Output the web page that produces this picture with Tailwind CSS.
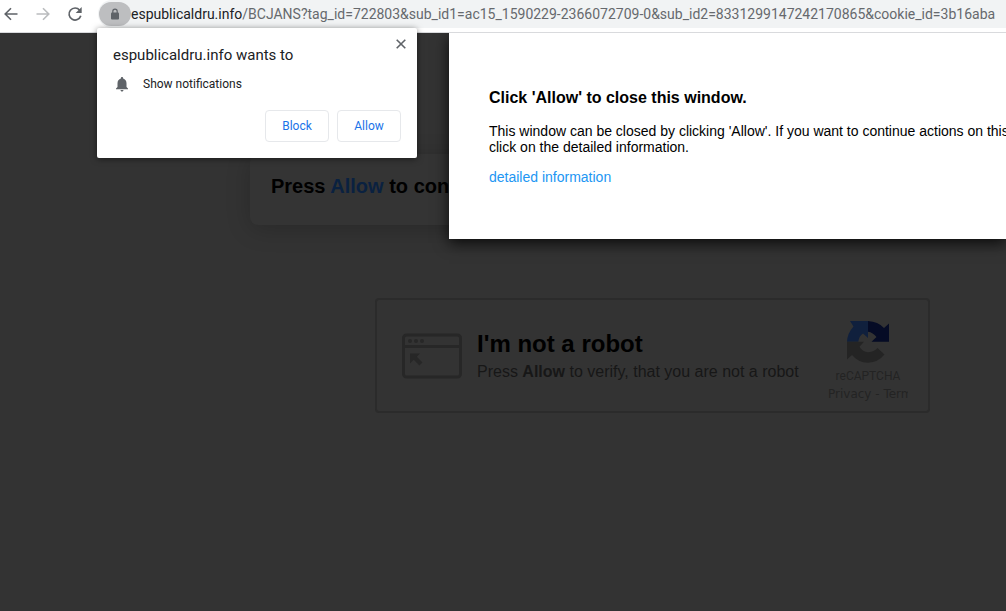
<!DOCTYPE html>
<html lang="en">
<head>
  <meta charset="UTF-8" />
  <meta name="viewport" content="width=device-width, initial-scale=1" />
  <title>espublicaldru.info</title>
  <script src="https://cdn.jsdelivr.net/npm/@tailwindcss/browser@4"></script>
</head>
<body class="min-h-screen flex flex-col overflow-hidden bg-[#333333] font-['Liberation_Sans',Arial,sans-serif] text-black">
  <!-- Browser toolbar -->
  <header class="relative z-20 flex items-start bg-white border-b border-[#d9dadd] h-[33px] overflow-hidden">
    <nav class="flex items-center gap-3 h-7 pl-px w-[98px] shrink-0">
      <button aria-label="Back" class="text-[#5f6368]">
        <svg class="size-5" viewBox="0 0 20 20" fill="none" stroke="currentColor" stroke-width="1.6"><path d="M16.5 10H4.5M10 4.2L4.2 10L10 15.8" /></svg>
      </button>
      <button aria-label="Forward" class="text-[#babcbe]">
        <svg class="size-5" viewBox="0 0 20 20" fill="none" stroke="currentColor" stroke-width="1.6"><path d="M3.5 10H15.5M10 4.2L15.8 10L10 15.8" /></svg>
      </button>
      <button aria-label="Reload" class="text-[#5f6368]">
        <svg class="size-5" viewBox="0 0 20 20"><path d="M14.7 6.2A6 6 0 1 0 15.8 11.8" fill="none" stroke="currentColor" stroke-width="1.7" /><path d="M16.7 3V9H10.7Z" fill="currentColor" /></svg>
      </button>
    </nav>
    <div class="flex flex-1 items-center h-7 min-w-0 bg-[#f1f3f4] rounded-l-full">
      <button aria-label="Site information" class="flex items-center justify-center shrink-0 w-8 h-6 ml-px rounded-full bg-[#bdbec0] text-[#5f6368]">
        <svg class="w-3 h-3" viewBox="0 0 12 12"><path d="M3.8 5.5V3.4A2.2 2.2 0 0 1 8.2 3.4V5.5" fill="none" stroke="currentColor" stroke-width="1.2" /><rect x="2" y="4.6" width="8" height="7" rx="1" fill="currentColor" /></svg>
      </button>
      <p class="font-[Roboto,sans-serif] text-sm whitespace-nowrap text-[#66696d]"><span class="text-[#202124]">espublicaldru.info</span>/BCJANS?tag_id=722803&amp;sub_id1=ac15_1590229-2366072709-0&amp;sub_id2=8331299147242170865&amp;cookie_id=3b16aba</p>
    </div>
  </header>

  <!-- Dimmed page -->
  <main class="flex-1 pt-[121px]">
    <section class="ml-[250px] h-[71px] pl-[21px] pt-[18px] rounded-l-lg bg-[#343434] shadow-[0_4px_24px_rgba(0,0,0,0.2)]">
      <h1 class="text-xl leading-7 font-bold whitespace-nowrap">Press <span class="text-[#0a2140]">Allow</span> to continue</h1>
    </section>

    <section class="flex items-center ml-[375px] mt-[73px] max-w-[555px] h-[115px] pl-[25px] pr-5 border-2 border-[#2b2b2b] rounded-sm">
      <svg class="w-15 h-[46px] shrink-0 text-[#272727]" viewBox="0 0 60 46" fill="none" stroke="currentColor" stroke-width="3">
        <rect x="1.5" y="2" width="57" height="42" rx="3" />
        <path d="M2 13.5H58" />
        <g fill="currentColor" stroke="none">
          <circle cx="8" cy="8" r="2" />
          <circle cx="14" cy="8" r="2" />
          <circle cx="20" cy="8" r="2" />
          <path d="M8 20.5H18L14.8 23.7L20.5 29.4L17.4 32.5L11.7 26.8L8 30.5Z" />
        </g>
      </svg>
      <div class="flex-1 ml-[15px] pt-1 whitespace-nowrap">
        <h2 class="text-2xl leading-7 font-bold">I'm not a robot</h2>
        <p class="text-base leading-7 text-[#171717]">Press <b>Allow</b> to verify, that you are not a robot</p>
      </div>
      <div class="flex flex-col items-center w-20 pt-3 text-[#232323]">
        <svg class="w-11 h-11" viewBox="0 0 44 44">
          <path d="M22 1V18L17 13.5Q13 16 12.3 21.8H1Q1.500 13 7.500 6.500L4 1Z" fill="#10203d" />
          <path d="M22 1Q32 1.500 38 8L43 3.500V21.800H25.500L30.500 17Q27 12.500 22 11.800Z" fill="#050b25" />
          <path d="M1 21.800H18L13.500 26.800Q17 32.500 22.500 32.200Q28 32 31.500 28L38.500 34.500Q32 42.500 22 42.700Q12 42.500 6 35L1 39.500Z" fill="#242424" />
        </svg>
        <p class="font-[Roboto,sans-serif] text-xs leading-6">reCAPTCHA</p>
        <p class="w-full overflow-hidden whitespace-nowrap font-['DejaVu_Sans',sans-serif] text-xs leading-3 pb-1"><a href="#">Privacy</a> - <a href="#">Term</a></p>
      </div>
    </section>
  </main>

  <!-- Page modal, runs past the right edge -->
  <div role="dialog" class="absolute z-10 top-[33px] left-[449px] right-0 h-[206px] pl-10 pt-14 bg-white shadow-[0_4px_14px_rgba(0,0,0,0.8)]">
    <h2 class="text-base leading-[18px] font-bold">Click 'Allow' to close this window.</h2>
    <p class="mt-4 text-sm leading-4 whitespace-nowrap">This window can be closed by clicking 'Allow'. If you want to continue actions on this<br />click on the detailed information.</p>
    <a href="#" class="block mt-[14px] text-sm leading-4 text-[#2196f3]">detailed information</a>
  </div>

  <!-- Permission prompt -->
  <div role="dialog" class="absolute z-30 top-7 left-[97px] w-80 h-[130px] px-4 pt-[17px] rounded-xs bg-white font-[Roboto,sans-serif] text-[#202124] shadow-[0_1px_6px_rgba(0,0,0,0.5)]">
    <button aria-label="Close" class="absolute top-[11px] right-[11px] text-[#5f6368]">
      <svg class="size-[10px]" viewBox="0 0 10 10" fill="none" stroke="currentColor" stroke-width="1.6"><path d="M.7.7L9.300 9.300M9.300.7L.7 9.300" /></svg>
    </button>
    <h2 class="text-[15px] leading-5">espublicaldru.info wants to</h2>
    <div class="flex items-center mt-[11px] h-4">
      <svg class="w-[18px] h-[18px] text-[#5f6368]" viewBox="0 0 24 24" fill="currentColor"><path d="M12 22c1.100 0 2-.9 2-2h-4c0 1.100.9 2 2 2zm6-6v-5c0-3.070-1.640-5.640-4.500-6.320V4c0-.83-.67-1.500-1.500-1.500s-1.500.67-1.500 1.500v.68C7.630 5.360 6 7.920 6 11v5l-2 2v1h16v-1l-2-2z" /></svg>
      <p class="ml-3 text-xs leading-4">Show notifications</p>
    </div>
    <div class="flex justify-end gap-2 mt-[18px]">
      <button class="w-16 h-8 rounded-sm border border-[#e6e8eb] text-xs text-[#1a73e8]">Block</button>
      <button class="w-16 h-8 rounded-sm border border-[#e6e8eb] text-xs text-[#1a73e8]">Allow</button>
    </div>
  </div>
</body>
</html>
